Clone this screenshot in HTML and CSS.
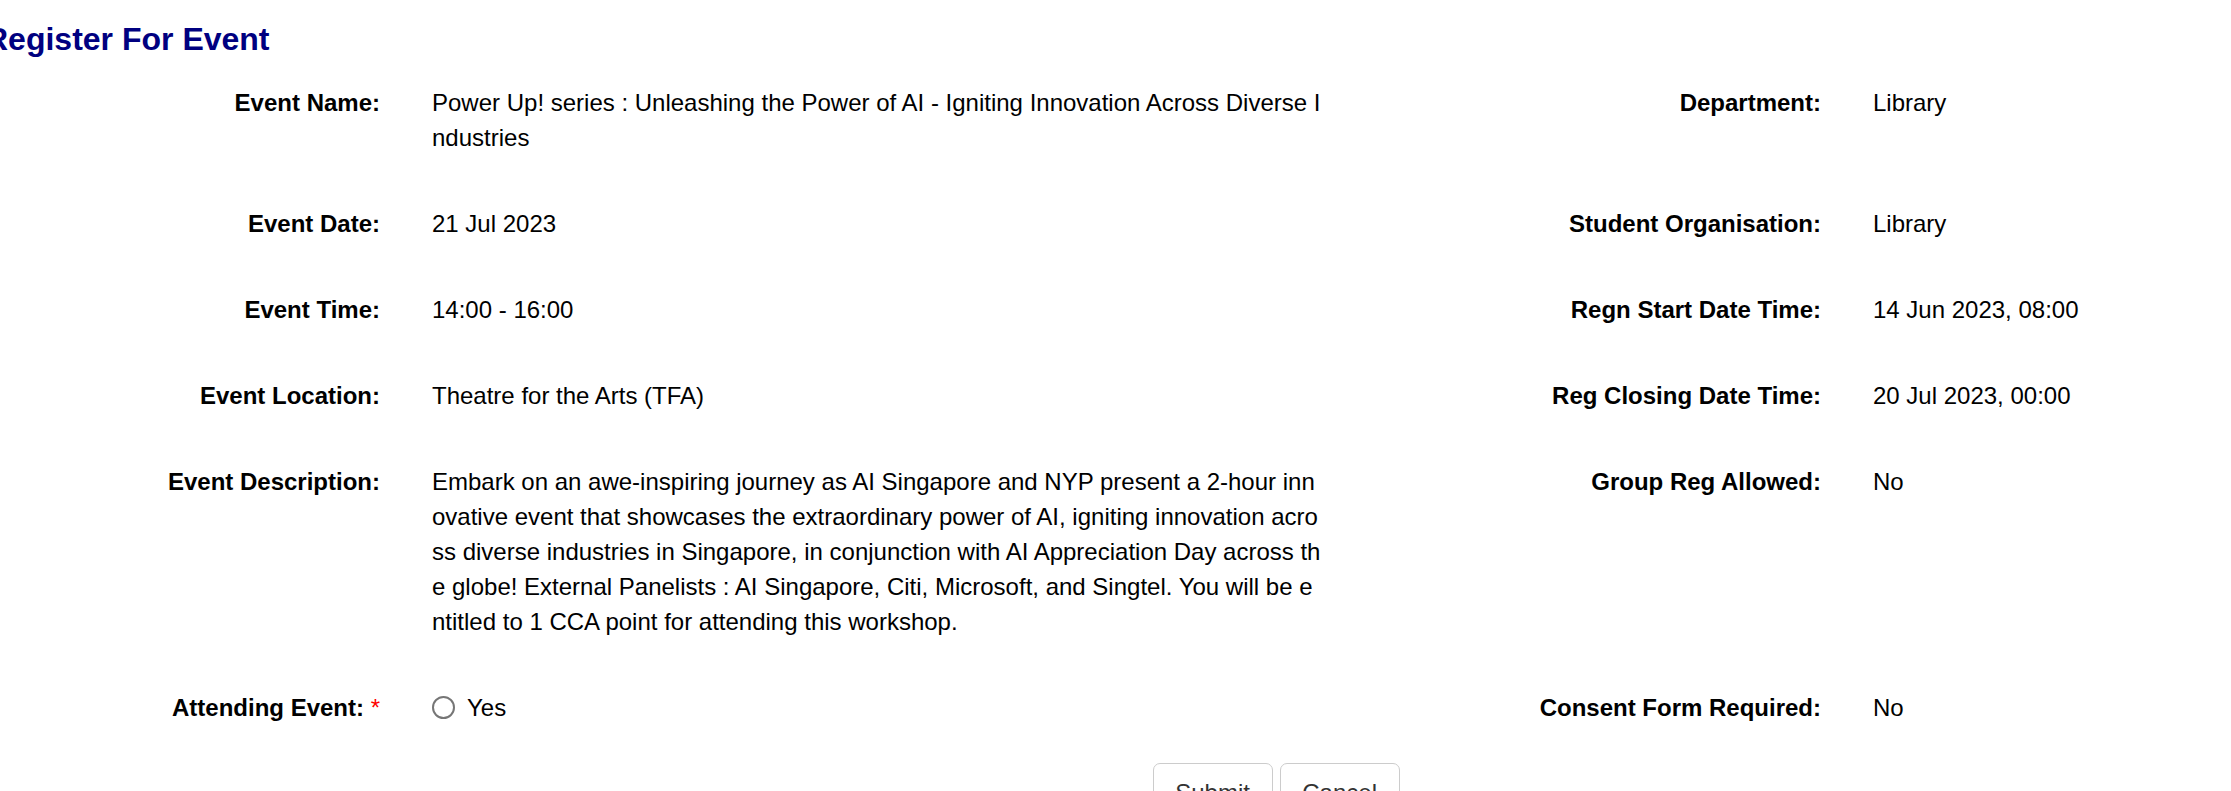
FILE: index.html
```html
<!DOCTYPE html>
<html lang="en">
<head>
<meta charset="utf-8">
<meta name="viewport" content="width=device-width, initial-scale=1">
<title>Register For Event</title>
<link rel="stylesheet" href="styles.css">
</head>
<body>
<main class="page">
  <h1 class="title">Register For Event</h1>
  <form class="form">
    <dl class="details">
      <dt class="label">Event Name:</dt>
      <dd class="value">Power Up! series : Unleashing the Power of AI - Igniting Innovation Across Diverse Industries</dd>
      <dt class="label">Department:</dt>
      <dd class="value">Library</dd>

      <dt class="label">Event Date:</dt>
      <dd class="value">21 Jul 2023</dd>
      <dt class="label">Student Organisation:</dt>
      <dd class="value">Library</dd>

      <dt class="label">Event Time:</dt>
      <dd class="value">14:00 - 16:00</dd>
      <dt class="label">Regn Start Date Time:</dt>
      <dd class="value">14 Jun 2023, 08:00</dd>

      <dt class="label">Event Location:</dt>
      <dd class="value">Theatre for the Arts (TFA)</dd>
      <dt class="label">Reg Closing Date Time:</dt>
      <dd class="value">20 Jul 2023, 00:00</dd>

      <dt class="label">Event Description:</dt>
      <dd class="value">Embark on an awe-inspiring journey as AI Singapore and NYP present a 2-hour innovative event that showcases the extraordinary power of AI, igniting innovation across diverse industries in Singapore, in conjunction with AI Appreciation Day across the globe! External Panelists : AI Singapore, Citi, Microsoft, and Singtel. You will be entitled to 1 CCA point for attending this workshop.</dd>
      <dt class="label">Group Reg Allowed:</dt>
      <dd class="value">No</dd>

      <dt class="label" id="attending-label">Attending Event: <span class="required">*</span></dt>
      <dd class="value" role="radiogroup" aria-labelledby="attending-label">
        <label class="option" for="attending-yes"><input class="radio" type="radio" id="attending-yes" name="attending" value="yes">Yes</label>
      </dd>
      <dt class="label">Consent Form Required:</dt>
      <dd class="value">No</dd>
    </dl>
    <div class="actions">
      <button class="button" type="submit">Submit</button>
      <button class="button" type="button">Cancel</button>
    </div>
  </form>
</main>
</body>
</html>
```
FILE: styles.css
```css
* {
  box-sizing: border-box;
}

body {
  margin: 0;
  overflow: hidden;
  background: #fff;
  color: #000;
  font-family: "Liberation Sans", Arial, sans-serif;
  font-size: 24px;
  line-height: 35px;
}

.page {
  padding-top: 20px;
}

.title {
  margin: 0 0 27px -15px;
  color: #000080;
  font-size: 32px;
  line-height: 38px;
}

.details {
  display: grid;
  grid-template-columns: 406fr 962fr 479fr 384fr;
  row-gap: 51px;
  margin: 0;
}

.label {
  padding-right: 26px;
  font-weight: bold;
  text-align: right;
}

.value {
  margin: 0;
  padding: 0 46px 0 26px;
  word-break: break-all;
}

.required {
  color: #f00;
  font-weight: normal;
}

.option {
  display: flex;
  align-items: center;
  gap: 12px;
}

.radio {
  appearance: none;
  width: 23px;
  height: 23px;
  margin: 0;
  border: 2px solid #767676;
  border-radius: 50%;
  background: #fff;
}

.radio:checked {
  background: radial-gradient(circle, #0075ff 50%, #fff 55%);
}

.actions {
  display: flex;
  justify-content: center;
  gap: 7px;
  margin-top: 38px;
  padding-left: 14.4%;
}

.button {
  min-width: 120px;
  padding: 11px 20px;
  border: 1px solid #ccc;
  border-radius: 7px;
  background: #fff;
  color: #333;
  font: inherit;
}
```
